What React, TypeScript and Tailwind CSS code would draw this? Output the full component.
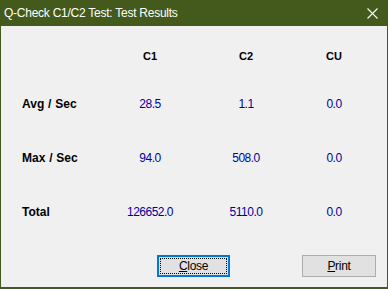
import React from "react";

const rows = [
  { label: "Avg / Sec", v: ["28.5", "1.1", "0.0"], mt: "mt-[28px]" },
  { label: "Max / Sec", v: ["94.0", "508.0", "0.0"], mt: "mt-[34px]" },
  { label: "Total", v: ["126652.0", "5110.0", "0.0"], mt: "mt-[34px]" },
];

export default function App() {
  return (
    <div className="w-[388px] h-[289px] flex flex-col bg-[#435a1c] font-['Liberation_Sans',Arial,sans-serif]">
      <div className="h-[26px] flex items-center justify-between pl-[4px] pr-[10px] text-white text-[12px] tracking-[-0.25px]">
        <span>Q-Check C1/C2 Test: Test Results</span>
        <svg width="11" height="11" viewBox="0 0 11 11" className="block">
          <path d="M0.5 0.5 L10.5 10.5 M10.5 0.5 L0.5 10.5" stroke="white" strokeWidth="1.1" />
        </svg>
      </div>
      <div className="flex-1 mx-px mb-[2px] bg-[#f0f0f0] flex flex-col pl-[21px]">
        <div className="mt-[20px] h-[20px] grid grid-cols-[80px_96px_96px_80px] items-center text-[11px] font-bold text-black">
          <div />
          <div className="text-center">C1</div>
          <div className="text-center">C2</div>
          <div className="text-center">CU</div>
        </div>
        {rows.map((r) => (
          <div
            key={r.label}
            className={`${r.mt} h-[20px] grid grid-cols-[80px_96px_96px_80px] items-center`}
          >
            <div className="text-[12px] font-bold text-black [word-spacing:0.5px]">{r.label}</div>
            {r.v.map((x, i) => (
              <div key={i} className="text-center text-[12px] tracking-[-0.5px] text-[#0000a0]">
                {x}
              </div>
            ))}
          </div>
        ))}
        <div className="mt-[33px] flex pl-[135px]">
          <div className="w-[73px] h-[22px] border-2 border-[#0078d7] bg-[#e1e1e1] p-px">
            <div className="w-full h-full border border-dotted border-black flex items-center justify-center text-[12px] text-black tracking-[-0.3px]">
              <span><span className="underline">C</span>lose</span>
            </div>
          </div>
          <div className="ml-[72px] w-[74px] h-[22px] border border-[#adadad] bg-[#e1e1e1] flex items-center justify-center text-[12px] text-black tracking-[-0.3px]">
            <span><span className="underline">P</span>rint</span>
          </div>
        </div>
      </div>
    </div>
  );
}
